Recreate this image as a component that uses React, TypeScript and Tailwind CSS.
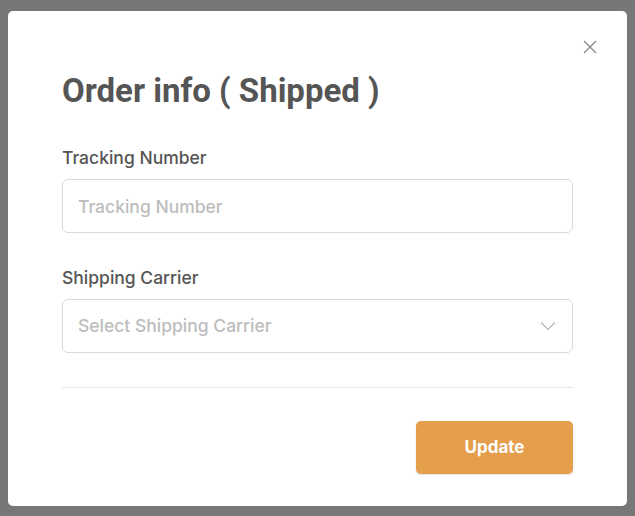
import React from 'react';

export default function App() {
  return (
    <div className="h-[516px] w-[635px] bg-[#777777] pt-[11px] px-[8px] font-['Inter',sans-serif]">
      <div className="relative h-[495px] w-[619px] rounded-[5px] bg-white px-[54px] pt-[56px]">
        {/* close */}
        <button className="absolute right-[29px] top-[28px] text-[#8a8a8a]">
          <svg width="16" height="16" viewBox="0 0 16 16" fill="none" stroke="currentColor" strokeWidth="1.4">
            <path d="M2 2 L14 14 M14 2 L2 14" />
          </svg>
        </button>

        <h2 className="text-[33px] font-bold leading-[48px] tracking-[0px] text-[#555555] font-['Roboto',sans-serif]">
          Order info ( Shipped )
        </h2>

        <div className="mt-[31px]">
          <label className="block text-[17.5px] font-medium leading-[24px] text-[#555555]">Tracking Number</label>
          <input
            placeholder="Tracking Number"
            className="mt-[9px] h-[54px] w-full rounded-[6px] border border-[#d9d9d9] px-[15px] text-[17.5px] font-medium text-[#555] placeholder:text-[#bdbdbd] outline-none"
          />
        </div>

        <div className="mt-[33px]">
          <label className="block text-[17.5px] font-medium leading-[24px] text-[#555555]">Shipping Carrier</label>
          <div className="mt-[9px] flex h-[54px] w-full items-center justify-between rounded-[6px] border border-[#d9d9d9] pl-[15px] pr-[15px]">
            <span className="text-[17.5px] font-medium text-[#bdbdbd]">Select Shipping Carrier</span>
            <svg width="18" height="18" viewBox="0 0 18 18" fill="none" stroke="#b5b5b5" strokeWidth="1.2">
              <path d="M2 5.5 L9 12.5 L16 5.5" />
            </svg>
          </div>
        </div>

        <div className="mt-[34px] h-px w-full bg-[#e5e5e5]" />

        <div className="mt-[33px] flex justify-end">
          <button className="h-[53px] w-[157px] rounded-[5px] bg-[#e59e4b] text-[17px] font-bold text-white shadow-[0_1px_2px_rgba(0,0,0,0.12)]">
            Update
          </button>
        </div>
      </div>
    </div>
  );
}
